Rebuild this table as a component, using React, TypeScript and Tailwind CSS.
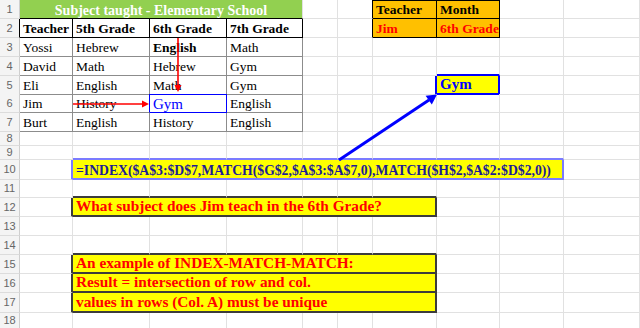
import React from 'react';
import { twMerge } from 'tailwind-merge';

const GRID = 'grid grid-cols-[20px_53px_77px_77px_76px_35px_35px_64px_63px_64px_1fr]';
const TB = 'border-r-[#8c8c8c] border-b-[#8c8c8c]';
const HD = 'font-bold border-r-black border-b-black';
const OR = 'bg-[#ffc000] font-bold border-r-black border-b-black';
const DK_B = 'border-b-2 border-b-[#3c3c3c]';
const DK_R = 'border-r-2 border-r-[#3c3c3c]';
const NOTE = 'col-span-6 bg-[#ffff00] text-[15.3px] font-bold text-[#ff0000] border-r-2 border-b-2 border-r-[#3c3c3c] border-b-[#3c3c3c]';

function Cell({ className = '', children }: { className?: string; children?: React.ReactNode }) {
  return (
    <div
      className={twMerge(
        'flex items-end whitespace-nowrap border-r border-b border-r-[#e1e1e1] border-b-[#e1e1e1] px-[3px]',
        className,
      )}
    >
      {children}
    </div>
  );
}

function Row({ n, h, head = '', children }: { n: number; h: string; head?: string; children?: React.ReactNode }) {
  return (
    <div className={`${GRID} ${h}`}>
      <div
        className={twMerge(
          "flex items-center justify-center border-r border-b border-r-[#cfcfcf] border-b-[#dcdcdc] bg-[#f4f4f4] font-['Liberation_Sans',sans-serif] text-[11px] text-[#666666]",
          head,
        )}
      >
        {n}
      </div>
      {children}
    </div>
  );
}

function Blank({ count }: { count: number }) {
  return (
    <>
      {Array.from({ length: count }).map((_, i) => (
        <Cell key={i} />
      ))}
    </>
  );
}

function Arrows() {
  return (
    <svg className="pointer-events-none absolute left-0 top-0" width="640" height="328">
      <line x1="178" y1="38" x2="178" y2="86" stroke="#ff0000" strokeWidth="1.6" />
      <polygon points="178,92 174.5,85 181.5,85" fill="#ff0000" />
      <line x1="73" y1="104" x2="143" y2="104" stroke="#ff0000" strokeWidth="1.6" />
      <polygon points="149,104 142,100.5 142,107.5" fill="#ff0000" />
      <line x1="339" y1="160" x2="429" y2="100" stroke="#0000ff" strokeWidth="3" />
      <polygon points="437,94.5 431.8,104.4 425.6,95.7" fill="#0000ff" />
    </svg>
  );
}

export default function App() {
  return (
    <div className="relative h-[328px] w-[640px] overflow-hidden bg-white font-['Liberation_Serif',serif] text-[13.5px] leading-[1.1] text-black">
      <Row n={1} h="h-[19px]">
        <Cell className="col-span-4 justify-center bg-[#92d050] text-[14px] font-bold text-white border-b-black">
          Subject taught - Elementary School
        </Cell>
        <Cell />
        <Cell className="border-r-black" />
        <Cell className={`${OR} border-t border-t-black`}>Teacher</Cell>
        <Cell className={`${OR} border-t border-t-black`}>Month</Cell>
        <Blank count={2} />
      </Row>
      <Row n={2} h="h-[19px]" head="border-r-black">
        <Cell className={HD}>Teacher</Cell>
        <Cell className={HD}>5th Grade</Cell>
        <Cell className={HD}>6th Grade</Cell>
        <Cell className={HD}>7th Grade</Cell>
        <Cell />
        <Cell className="border-r-black" />
        <Cell className={`${OR} text-[#ff0000]`}>Jim</Cell>
        <Cell className={`${OR} text-[#ff0000]`}>6th Grade</Cell>
        <Blank count={2} />
      </Row>
      <Row n={3} h="h-[19px]">
        <Cell className={TB}>Yossi</Cell>
        <Cell className={TB}>Hebrew</Cell>
        <Cell className={`${TB} font-bold`}>English</Cell>
        <Cell className={TB}>Math</Cell>
        <Blank count={6} />
      </Row>
      <Row n={4} h="h-[19px]">
        <Cell className={TB}>David</Cell>
        <Cell className={TB}>Math</Cell>
        <Cell className={TB}>Hebrew</Cell>
        <Cell className={TB}>Gym</Cell>
        <Blank count={3} />
        <Cell className="border-b-2 border-b-[#0000ff]" />
        <Blank count={2} />
      </Row>
      <Row n={5} h="h-[18px]">
        <Cell className={TB}>Eli</Cell>
        <Cell className={TB}>English</Cell>
        <Cell className={`${TB} border-b-[#0000ff]`}>Math</Cell>
        <Cell className={TB}>Gym</Cell>
        <Blank count={2} />
        <Cell className="border-r-2 border-r-[#0000ff]" />
        <Cell className="bg-[#ffff00] text-[15px] font-bold text-[#0000ff] border-r-2 border-b-2 border-r-[#0000ff] border-b-[#0000ff]">
          Gym
        </Cell>
        <Blank count={2} />
      </Row>
      <Row n={6} h="h-[19px]">
        <Cell className={TB}>Jim</Cell>
        <Cell className={`${TB} border-r-[#0000ff]`}>History</Cell>
        <Cell className="border-r-[#0000ff] border-b-[#0000ff] text-[15px] text-[#0000ff]">Gym</Cell>
        <Cell className={TB}>English</Cell>
        <Blank count={6} />
      </Row>
      <Row n={7} h="h-[19px]">
        <Cell className={TB}>Burt</Cell>
        <Cell className={TB}>English</Cell>
        <Cell className={TB}>History</Cell>
        <Cell className={TB}>English</Cell>
        <Blank count={6} />
      </Row>
      <Row n={8} h="h-[14px]">
        <Blank count={10} />
      </Row>
      <Row n={9} h="h-[14px]">
        <Cell />
        {Array.from({ length: 8 }).map((_, i) => (
          <Cell key={i} className="border-b-2 border-b-[#7b7bff]" />
        ))}
        <Cell />
      </Row>
      <Row n={10} h="h-[20px]">
        <Cell className="border-r-2 border-r-[#7b7bff]" />
        <Cell className="col-span-8 bg-[#ffff00] text-[13.7px] font-bold text-[#1c1c96] border-r-2 border-b-2 border-r-[#7b7bff] border-b-[#7b7bff]">
          =INDEX($A$3:$D$7,MATCH($G$2,$A$3:$A$7,0),MATCH($H$2,$A$2:$D$2,0))
        </Cell>
        <Cell />
      </Row>
      <Row n={11} h="h-[18px]">
        <Cell />
        {Array.from({ length: 6 }).map((_, i) => (
          <Cell key={i} className={DK_B} />
        ))}
        <Blank count={3} />
      </Row>
      <Row n={12} h="h-[19px]">
        <Cell className={DK_R} />
        <Cell className={NOTE}>What subject does Jim teach in the 6th Grade?</Cell>
        <Blank count={3} />
      </Row>
      <Row n={13} h="h-[19px]">
        <Blank count={10} />
      </Row>
      <Row n={14} h="h-[19px]">
        <Cell />
        {Array.from({ length: 6 }).map((_, i) => (
          <Cell key={i} className={DK_B} />
        ))}
        <Blank count={3} />
      </Row>
      <Row n={15} h="h-[19px]">
        <Cell className={DK_R} />
        <Cell className={NOTE}>An example of INDEX-MATCH-MATCH:</Cell>
        <Blank count={3} />
      </Row>
      <Row n={16} h="h-[19px]">
        <Cell className={DK_R} />
        <Cell className={NOTE}>Result = intersection of row and col.</Cell>
        <Blank count={3} />
      </Row>
      <Row n={17} h="h-[20px]">
        <Cell className={DK_R} />
        <Cell className={NOTE}>values in rows (Col. A) must be unique</Cell>
        <Blank count={3} />
      </Row>
      <Row n={18} h="h-[16px]">
        <Blank count={10} />
      </Row>
      <Arrows />
    </div>
  );
}
